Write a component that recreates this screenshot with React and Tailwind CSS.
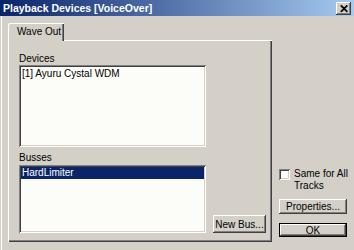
import React from "react";

const font = { fontFamily: '"Liberation Sans", Arial, sans-serif' };

const btn =
  "bg-[#d4d0c8] shadow-[inset_-1px_-1px_#404040,inset_1px_1px_#ffffff,inset_-2px_-2px_#808080] flex items-center justify-center text-black";

const sunken =
  "bg-[#fcfdf9] shadow-[inset_1px_1px_#808080,inset_-1px_-1px_#ffffff,inset_2px_2px_#404040,inset_-2px_-2px_#d4d0c8]";

export default function App() {
  return (
    <div
      className="w-[354px] h-[250px] bg-[#d4d0c8] overflow-hidden text-[10px] text-black shadow-[inset_1px_0_#d4d0c8,inset_2px_0_#ffffff]"
      style={font}
    >
      <div className="h-[16px] flex items-center justify-between pl-[3px] pr-[3px] bg-[linear-gradient(to_right,#0a246a,#a6caf0)]">
        <span className="text-white font-bold text-[10.5px] leading-none">
          Playback Devices [VoiceOver]
        </span>
        <div className={`${btn} w-[15px] h-[13px] mt-[1px] text-[12px] font-bold leading-none`}>
          ✕
        </div>
      </div>
      <div className="flex">
        <div className="ml-[8px] mt-[7px] w-[264px] flex flex-col">
          <div className="flex h-[18px] relative z-10">
            <div className="w-[56px] h-[18px] bg-[#d4d0c8] rounded-tl-[2px] shadow-[inset_1px_1px_#ffffff,inset_-1px_0_#404040,inset_-2px_0_#808080] flex items-start pl-[9px] pt-[3px] leading-[12px]">
              Wave Out
            </div>
          </div>
          <div className="-mt-[1px] h-[202px] shadow-[inset_1px_1px_#ffffff,inset_-1px_-1px_#404040,inset_-2px_-2px_#808080] pl-[11px] pt-[12px] flex flex-col">
            <div className="h-[13px] leading-[13px]">Devices</div>
            <div className={`${sunken} w-[187px] h-[82px] pt-[3px] pl-[3px] leading-[12px]`}>
              [1] Ayuru Cystal WDM
            </div>
            <div className="h-[13px] leading-[13px] mt-[4px] mb-[1px]">Busses</div>
            <div className="flex items-end">
              <div className={`${sunken} w-[187px] h-[68px] pt-[2px] pl-[2px] pr-[2px]`}>
                <div className="h-[12px] leading-[12px] bg-[#0a246a] text-white pl-[1px]">
                  HardLimiter
                </div>
              </div>
              <div className={`${btn} ml-[7px] w-[53px] h-[18px]`}>New Bus...</div>
            </div>
          </div>
        </div>
        <div className="ml-[7px] w-[68px] flex flex-col">
          <div className="mt-[153px] flex">
            <div className="w-[11px] h-[11px] shrink-0 bg-white shadow-[inset_1px_1px_#808080,inset_-1px_-1px_#ffffff,inset_2px_2px_#404040,inset_-2px_-2px_#d4d0c8]" />
            <div className="ml-[4px] leading-[12px] -mt-[1px] whitespace-nowrap">
              Same for All
              <br />
              Tracks
            </div>
          </div>
          <div className={`${btn} mt-[7px] h-[15px]`}>Properties...</div>
          <div className="mt-[9px] h-[14px] border border-black flex">
            <div className={`${btn} flex-1`}>OK</div>
          </div>
        </div>
      </div>
    </div>
  );
}
